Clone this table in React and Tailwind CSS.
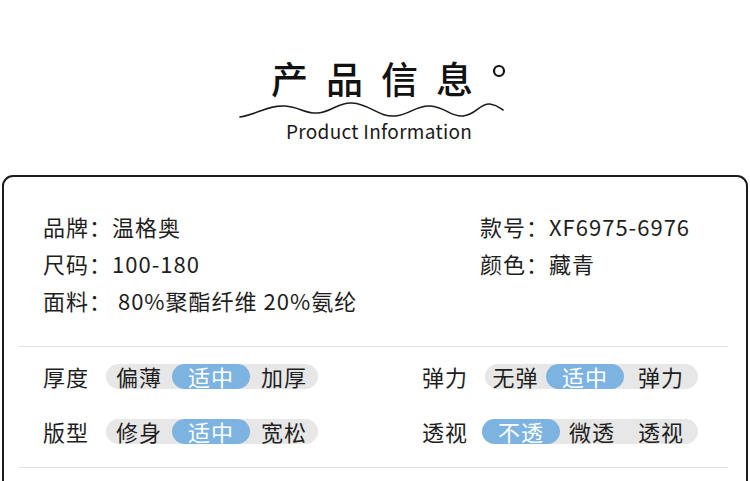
import React from "react";

const font = { fontFamily: '"Noto Sans CJK SC", "Noto Sans", sans-serif' };

function Pill({ segs }) {
  return (
    <div className="flex h-[25px] rounded-full bg-[#e7e7e7]">
      {segs.map((s, i) => (
        <div
          key={i}
          className={
            (s.active
              ? "bg-[#7db3e1] text-white rounded-full "
              : "text-[#1e1e1e] ") +
            s.w +
            " h-[25px] flex items-center justify-center text-[22px] leading-[25px] tracking-[1px]"
          }
        >
          {s.t}
        </div>
      ))}
    </div>
  );
}

export default function App() {
  return (
    <div
      className="w-[750px] h-[481px] overflow-hidden bg-white text-[#1e1e1e]"
      style={font}
    >
      <div className="pt-[58px]">
        <div className="flex ml-[271px] h-[40px]">
          <span className="text-[37px] leading-[40px] tracking-[18px] font-medium text-[#111]">
            产品信息
          </span>
          <svg className="w-[14px] h-[14px] mt-[6px] ml-[1px]" viewBox="0 0 14 14">
            <circle cx="7" cy="7" r="5" fill="none" stroke="#111" strokeWidth="2.2" />
          </svg>
        </div>
        <svg className="block ml-[236px] mt-[-2px] w-[272px] h-[26px]" viewBox="236 96 272 26">
          <path
            d="M240 117 C 258 114, 268 105, 285 106 C 300 107, 305 114, 318 113 C 332 112, 338 102, 352 103 C 370 104, 378 117, 395 116 C 410 115, 416 105, 430 106 C 446 107, 450 117, 463 116 C 476 115, 480 103, 490 104 C 497 105, 500 108, 503 110"
            fill="none"
            stroke="#1a1a1a"
            strokeWidth="1.6"
            strokeLinecap="round"
          />
        </svg>
        <div className="ml-[286px] mt-[-2px] h-[22px] text-[19px] leading-[22px] text-[#1a1a1a] tracking-[0.3px]">
          Product Information
        </div>
      </div>

      <div className="ml-[2px] mt-[33px] w-[746px] h-[400px] border-2 border-[#1c1c1c] rounded-[11px] pt-[31px]">
        {[
          ["品牌：温格奥", "款号：XF6975-6976"],
          ["尺码：100-180", "颜色：藏青"],
          ["面料： 80%聚酯纤维 20%氨纶", ""],
        ].map((r, i) => (
          <div key={i} className="flex h-[37px] items-center text-[22px] leading-[37px] tracking-[1px]">
            <div className="ml-[39px] w-[437px] whitespace-pre">{r[0]}</div>
            <div>{r[1]}</div>
          </div>
        ))}

        <div className="mt-[27px] ml-[15px] mr-[18px] h-px bg-[#e3e3e3]" />

        <div className="pt-[17px]">
          <div className="flex h-[25px] items-center">
            <div className="ml-[39px] w-[379px] flex items-center">
              <div className="w-[63px] text-[22px] leading-[25px] tracking-[1px]">厚度</div>
              <Pill
                segs={[
                  { t: "偏薄", w: "w-[66px]" },
                  { t: "适中", w: "w-[78px]", active: true },
                  { t: "加厚", w: "w-[68px]" },
                ]}
              />
            </div>
            <div className="flex items-center">
              <div className="w-[63px] text-[22px] leading-[25px] tracking-[1px]">弹力</div>
              <Pill
                segs={[
                  { t: "无弹", w: "w-[61px]" },
                  { t: "适中", w: "w-[78px]", active: true },
                  { t: "弹力", w: "w-[74px]" },
                ]}
              />
            </div>
          </div>

          <div className="flex h-[25px] items-center mt-[30px]">
            <div className="ml-[39px] w-[379px] flex items-center">
              <div className="w-[63px] text-[22px] leading-[25px] tracking-[1px]">版型</div>
              <Pill
                segs={[
                  { t: "修身", w: "w-[66px]" },
                  { t: "适中", w: "w-[78px]", active: true },
                  { t: "宽松", w: "w-[68px]" },
                ]}
              />
            </div>
            <div className="flex items-center">
              <div className="w-[60px] text-[22px] leading-[25px] tracking-[1px]">透视</div>
              <Pill
                segs={[
                  { t: "不透", w: "w-[78px]", active: true },
                  { t: "微透", w: "w-[64px]" },
                  { t: "透视", w: "w-[74px]" },
                ]}
              />
            </div>
          </div>
        </div>

        <div className="mt-[23px] ml-[15px] mr-[18px] h-px bg-[#e3e3e3]" />
      </div>
    </div>
  );
}
